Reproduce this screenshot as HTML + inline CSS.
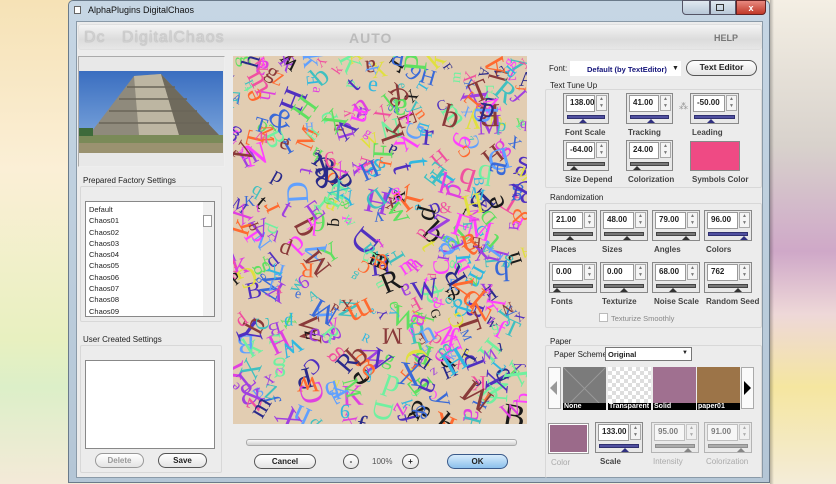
<!DOCTYPE html>
<html><head><meta charset="utf-8"><style>
*{box-sizing:border-box;margin:0;padding:0}
body{width:836px;height:484px;overflow:hidden;position:relative;font-family:"Liberation Sans",Arial,sans-serif;font-size:8px;color:#222;
background:linear-gradient(180deg,#f6e2b6 0%,#fbefd6 35%,#e8f0c0 70%,#dcefc8 80%,#f4ead8 100%)}
.a{position:absolute}
#bgR{left:770px;top:0;width:66px;height:484px;background:linear-gradient(180deg,#f4efe4 0%,#d8d2cc 30%,#cfa8c8 52%,#eed8d8 65%,#f5e6a0 80%,#f4ecd8 100%)}
#win{left:68px;top:0;width:702px;height:483px;background:linear-gradient(180deg,#c6d6e4,#b4c6d6);border:1px solid #6a7a8a;border-radius:5px 5px 0 0}
#cont{left:76px;top:21px;width:687px;height:457px;background:#ececec;border:1px solid #8a9aa8}
.lbl{position:absolute;white-space:nowrap}
.box{position:absolute;background:#fff;border:1px solid #888}
.gb{position:absolute;border:1px solid #d8d8d8;border-radius:2px}
.btn{position:absolute;border:1px solid #555;border-radius:9px;background:linear-gradient(#fff,#e4e4e4);text-align:center;font-weight:bold;font-size:8px;line-height:13px}
.w{position:absolute;border:1px solid #888;background:#e8e8e8}
.w .in{position:absolute;left:2px;top:1px;background:#fff;border:1px solid #999;font-weight:bold;font-size:8px;padding-left:3px;line-height:14px}
.w .sp{position:absolute;top:1px;width:11px;height:16px;border:1px solid #aaa;background:#f4f4f4;font-size:5px;text-align:center;line-height:7px;color:#777}
.w .tr{position:absolute;left:3px;height:4px;border:1px solid #444;background:#777}
.w .tri{position:absolute;width:0;height:0;border-left:4px solid transparent;border-right:4px solid transparent;border-bottom:4px solid #333}
.wl{position:absolute;font-weight:bold;font-size:8px;color:#444;white-space:nowrap}
#canvas{left:233px;top:56px;width:294px;height:368px;background:#e2cdb2;overflow:hidden}
#canvas span{position:absolute;font-family:"Liberation Serif",serif;line-height:1}
.th{position:absolute;top:367px;width:43px;height:43px}
.th b{position:absolute;left:0;bottom:0;width:100%;height:7px;background:#000;color:#fff;font-size:7px;line-height:7px;padding-left:1px}
</style></head><body>
<div class="a" id="bgR"></div>
<div class="a" id="win"></div>
<div class="a" style="left:74px;top:6px;width:7px;height:8px;background:#fff;border:1px solid #666"></div>
<div class="lbl" style="left:88px;top:5px;font-size:9px;color:#111">AlphaPlugins DigitalChaos</div>
<div class="a" style="left:682px;top:0;width:28px;height:15px;border:1px solid #556;border-radius:0 0 0 4px;background:linear-gradient(#e0e8f0,#b8c8d8)"></div>
<div class="a" style="left:710px;top:0;width:26px;height:15px;border:1px solid #556;background:linear-gradient(#e0e8f0,#b8c8d8)"></div>
<div class="a" style="left:716px;top:4px;width:8px;height:7px;border:1px solid #333"></div>
<div class="a" style="left:736px;top:0;width:30px;height:15px;border:1px solid #622;border-radius:0 0 4px 0;background:linear-gradient(#e88a80,#c03828);color:#fff;font-weight:bold;font-size:9px;text-align:center;line-height:14px">x</div>
<div class="a" id="cont"></div>
<div class="a" style="left:78px;top:24px;width:684px;height:26px;border-radius:3px;background:linear-gradient(#f4f4f4,#dcdcdc 60%,#e6e6e6);border:1px solid #e0e0e0"></div>
<div class="lbl" style="left:84px;top:29px;font-size:16px;color:#d0d0d0;letter-spacing:1px;text-shadow:0 0 1px #999">Dc &nbsp; DigitalChaos</div>
<div class="lbl" style="left:349px;top:30px;font-size:14px;color:#bbb;font-weight:bold;letter-spacing:1px">AUTO</div>
<div class="lbl" style="left:714px;top:33px;font-size:9px;color:#777;font-weight:bold">HELP</div>

<div class="a" style="left:78px;top:56px;width:147px;height:111px;border:1px solid #aaa;border-right-color:#eee;border-bottom-color:#eee;background:#e8e8e8"></div>
<svg class="a" style="left:79px;top:71px" width="144" height="82" viewBox="0 0 144 82">
<defs><linearGradient id="sk" x1="0" y1="0" x2="0" y2="1"><stop offset="0" stop-color="#3a6ec0"/><stop offset="1" stop-color="#86aee0"/></linearGradient></defs>
<rect width="144" height="82" fill="url(#sk)"/>
<rect x="0" y="64" width="144" height="18" fill="#7a8a58"/>
<rect x="0" y="72" width="144" height="10" fill="#9a9270"/>
<polygon points="10,64 55,5 82,3 140,64" fill="#8f8a7c"/>
<polygon points="55,5 82,3 100,64 60,64" fill="#bdb6a2"/>
<polygon points="82,3 140,64 100,64" fill="#6f6a5c"/>
<path d="M20,52H130M30,40H118M40,28H108M48,16H96" stroke="#6a6558" stroke-width="1.5"/>
<rect x="0" y="57" width="14" height="8" fill="#3d6a3a"/>
</svg>
<div class="lbl" style="left:83px;top:176px;font-size:8px">Prepared Factory Settings</div>
<div class="gb" style="left:80px;top:186px;width:142px;height:136px"></div>
<div class="box" style="left:85px;top:201px;width:130px;height:116px"></div>
<div class="a" style="left:203px;top:202px;width:11px;height:114px;background:#f0f0f0"></div>
<div class="a" style="left:203px;top:215px;width:9px;height:12px;background:#fff;border:1px solid #999"></div>
<div class="lbl" style="left:89px;top:204px;line-height:11.3px;font-size:7.5px">Default<br>Chaos01<br>Chaos02<br>Chaos03<br>Chaos04<br>Chaos05<br>Chaos06<br>Chaos07<br>Chaos08<br>Chaos09</div>
<div class="lbl" style="left:83px;top:335px">User Created Settings</div>
<div class="gb" style="left:80px;top:345px;width:142px;height:128px"></div>
<div class="box" style="left:85px;top:360px;width:130px;height:89px"></div>
<div class="btn" style="left:95px;top:453px;width:49px;height:15px;color:#999;border-color:#999">Delete</div>
<div class="btn" style="left:158px;top:453px;width:49px;height:15px">Save</div>

<div class="a" id="canvas"></div>
<div class="a" style="left:246px;top:439px;width:271px;height:7px;border:1px solid #aaa;border-radius:3px;background:linear-gradient(#fafafa,#d0d0d0)"></div>
<div class="btn" style="left:254px;top:454px;width:62px;height:15px">Cancel</div>
<div class="btn" style="left:343px;top:454px;width:16px;height:15px">-</div>
<div class="lbl" style="left:372px;top:457px;color:#555">100%</div>
<div class="btn" style="left:402px;top:454px;width:17px;height:15px">+</div>
<div class="btn" style="left:447px;top:454px;width:61px;height:15px;border-color:#3a5a8a;background:linear-gradient(#d8ecfc,#8cc0ec)">OK</div>

<div class="lbl" style="left:549px;top:64px">Font:</div>
<div class="a" style="left:570px;top:61px;width:111px;height:15px;background:#fff"></div>
<div class="lbl" style="left:587px;top:65px;font-weight:bold;color:#14147a;font-size:7.5px">Default (by TextEditor)</div>
<div class="lbl" style="left:672px;top:65px;font-size:7px">▼</div>
<div class="btn" style="left:686px;top:60px;width:71px;height:16px;font-size:8.5px">Text Editor</div>
<div class="lbl" style="left:550px;top:81px;font-size:8px">Text Tune Up</div>
<div class="gb" style="left:545px;top:89px;width:217px;height:99px"></div>
<div class="a" style="left:690px;top:141px;width:50px;height:30px;background:#ef4a84;border:1px solid #888"></div>
<div class="wl" style="left:692px;top:175px">Symbols Color</div>
<div class="lbl" style="left:679px;top:101px;color:#999;font-size:9px">⁂</div>
<div class="lbl" style="left:550px;top:193px;font-size:8px">Randomization</div>
<div class="gb" style="left:545px;top:203px;width:217px;height:125px"></div>
<div class="a" style="left:599px;top:313px;width:9px;height:9px;border:1px solid #bbb;background:#fff"></div>
<div class="lbl" style="left:611px;top:314px;color:#888;font-size:7.5px">Texturize Smoothly</div>
<div class="lbl" style="left:550px;top:337px;font-size:8px">Paper</div>
<div class="gb" style="left:545px;top:345px;width:217px;height:133px;border-bottom:none"></div>
<div class="lbl" style="left:554px;top:350px">Paper Scheme</div>
<div class="a" style="left:605px;top:347px;width:87px;height:14px;background:#fff;border:1px solid #777"></div>
<div class="lbl" style="left:608px;top:350px;font-weight:bold;font-size:7.5px">Original</div>
<div class="lbl" style="left:682px;top:350px;font-size:6px">▼</div>
<div class="a" style="left:548px;top:367px;width:13px;height:42px;border:1px solid #aaa;background:#fafafa"></div>
<div class="a" style="left:550px;top:381px;width:0;height:0;border-top:7px solid transparent;border-bottom:7px solid transparent;border-right:7px solid #999"></div>
<div class="a" style="left:741px;top:367px;width:13px;height:42px;border:1px solid #aaa;background:#fafafa"></div>
<div class="a" style="left:744px;top:381px;width:0;height:0;border-top:7px solid transparent;border-bottom:7px solid transparent;border-left:7px solid #000"></div>
<svg class="th" style="left:563px" width="43" height="43"><rect width="43" height="43" fill="#7b7b7b"/><path d="M0 0L43 43M43 0L0 43" stroke="#999"/></svg>
<div class="th" style="left:563px"><b>None</b></div>
<div class="th" style="left:608px;background-color:#fff;background-image:linear-gradient(45deg,#ddd 25%,transparent 25%,transparent 75%,#ddd 75%),linear-gradient(45deg,#ddd 25%,transparent 25%,transparent 75%,#ddd 75%);background-size:8px 8px;background-position:0 0,4px 4px"><b>Transparent</b></div>
<div class="th" style="left:653px;background:#a07090"><b>Solid</b></div>
<div class="th" style="left:697px;background:#9c7448"><b>paper01</b></div>
<div class="a" style="left:548px;top:423px;width:41px;height:31px;border:1px solid #999;background:#fff"></div>
<div class="a" style="left:550px;top:425px;width:37px;height:27px;background:#9b6a8a"></div>
<div class="lbl" style="left:551px;top:458px;color:#aaa">Color</div>
<div id="wg"></div>
<div class="a" style="left:770px;top:0;width:4px;height:484px;background:linear-gradient(90deg,rgba(0,0,0,.25),transparent)"></div>
<script>
function W(x,y,w,val,pos,blue,dis,lab,lx){
 var h='<div class="w" style="left:'+x+'px;top:'+y+'px;width:'+w+'px;height:31px'+(dis?';opacity:.55':'')+'">';
 var iw=w-17;
 h+='<div class="in" style="width:'+iw+'px;height:17px">'+val+'</div>';
 h+='<div class="sp" style="left:'+(iw+3)+'px">▲<br>▼</div>';
 h+='<div class="tr" style="top:21px;width:'+(w-8)+'px;'+(blue?'background:#5050a0;border-color:#303070':'')+'"></div>';
 h+='<div class="tri" style="top:25px;left:'+(3+pos*(w-16))+'px;'+(blue?'border-bottom-color:#303080':'')+'"></div></div>';
 h+='<div class="wl" style="left:'+(lx||x+2)+'px;top:'+(y+35)+'px;'+(dis?'color:#aaa;font-weight:normal':'')+'">'+lab+'</div>';
 return h;}
var s='';
s+=W(563,93,46,'138.00',.4,1,0,'Font Scale');
s+=W(626,93,47,'41.00',.55,1,0,'Tracking');
s+=W(690,93,49,'-50.00',.4,1,0,'Leading');
s+=W(563,140,46,'-64.00',.1,0,0,'Size Depend');
s+=W(626,140,47,'24.00',.1,0,0,'Colorization');
var xs=[549,600,652,704],r1=[['21.00',.4,'Places'],['48.00',.6,'Sizes'],['79.00',.8,'Angles'],['96.00',1,'Colors']],r2=[['0.00',0,'Fonts'],['0.00',.5,'Texturize'],['68.00',.4,'Noise Scale'],['762',.8,'Random Seed']];
for(var i=0;i<4;i++){s+=W(xs[i],210,48,r1[i][0],r1[i][1],i==3,0,r1[i][2]);s+=W(xs[i],262,48,r2[i][0],r2[i][1],0,0,r2[i][2]);}
s+=W(595,422,48,'133.00',.7,1,0,'Scale',600);
s+=W(651,422,48,'95.00',.9,0,1,'Intensity');
s+=W(704,422,48,'91.00',.9,0,1,'Colorization');
document.getElementById('wg').innerHTML=s;
var c=document.getElementById('canvas'),seed=7;function R(){seed=(seed*16807)%2147483647;return seed/2147483647;}
var ch='ABCDEFGHKMNPRTVWXYZabdefghkmnpqrtwxyz9&',cols=['#e040e0','#3a6ad8','#30b8e0','#60e060','#f050a0','#2a2a8a','#8a3a3a','#e0e040','#a040e0','#40c0c0','#ff6a30','#60a0ff','#1a1a1a','#ff40ff','#70f0a0','#5030c0'],t='';
for(var i=0;i<480;i++){t+='<span style="left:'+(R()*300-12)+'px;top:'+(R()*375-15)+'px;font-size:'+(12+R()*22)+'px;color:'+cols[Math.floor(R()*cols.length)]+';transform:rotate('+(R()*360)+'deg)">'+ch[Math.floor(R()*ch.length)]+'</span>';}
c.innerHTML=t;
</script>
</body></html>
